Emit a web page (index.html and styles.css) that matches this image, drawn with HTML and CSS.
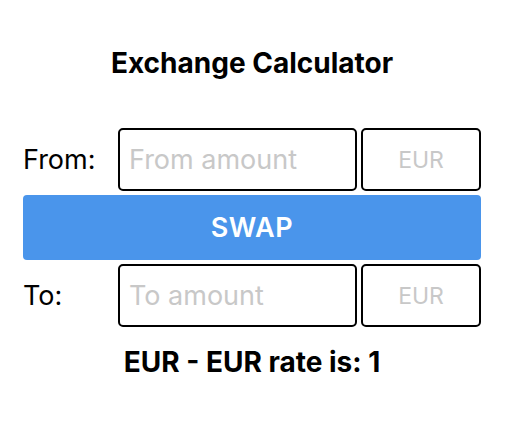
FILE: index.html
```html
<!DOCTYPE html>
<html>
<head>
<meta charset="utf-8">
<link rel="stylesheet" href="styles.css">
</head>
<body>
<div class="app">
  <h1 class="title">Exchange Calculator</h1>
  <div class="row">
    <label class="label">From:</label>
    <input class="amount" placeholder="From amount">
    <div class="currency">EUR</div>
  </div>
  <button class="swap">SWAP</button>
  <div class="row">
    <label class="label">To:</label>
    <input class="amount" placeholder="To amount">
    <div class="currency">EUR</div>
  </div>
  <div class="rate">EUR - EUR rate is: 1</div>
</div>
</body>
</html>
```
FILE: styles.css
```css
* { box-sizing: border-box; }
html, body { margin: 0; padding: 0; background: #fff; }
body { font-family: Inter, "Noto Sans", sans-serif; color: #000; }
.app {
  width: 458px;
  margin-left: 23px;
  padding-top: 46px;
  display: flex;
  flex-direction: column;
}
.title {
  margin: 0 0 48px;
  font-size: 28px;
  font-weight: 700;
  text-align: center;
  line-height: 34px;
}
.row {
  display: flex;
  align-items: center;
  gap: 4px;
  height: 63px;
}
.label {
  width: 91px;
  font-size: 27px;
}
.amount {
  width: 239px;
  height: 63px;
  border: 2px solid #000;
  border-radius: 5px;
  padding: 0 9px;
  font-family: inherit;
  font-size: 27px;
  outline: none;
}
.amount::placeholder { color: #c8c8c8; }
.currency {
  width: 120px;
  height: 63px;
  border: 2px solid #000;
  border-radius: 5px;
  display: flex;
  align-items: center;
  justify-content: center;
  font-size: 23px;
  color: #c8c8c8;
}
.swap {
  margin: 4px 0 4px;
  height: 65px;
  border: none;
  border-radius: 4px;
  background: #4a95eb;
  color: #fff;
  font-family: inherit;
  font-size: 27px;
  font-weight: 600;
  letter-spacing: 0.5px;
}
.rate {
  margin-top: 18px;
  text-align: center;
  font-size: 28px;
  font-weight: 700;
}
```
